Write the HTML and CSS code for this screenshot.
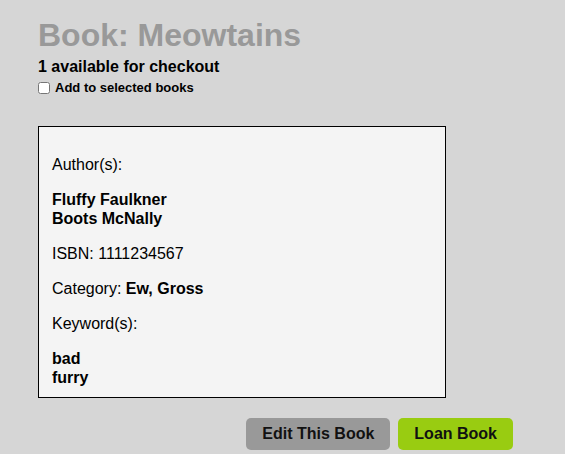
FILE: index.html
```html
<!DOCTYPE html>
<html lang="en">
<head>
<meta charset="utf-8">
<title>Book: Meowtains</title>
<link rel="stylesheet" href="styles.css">
</head>
<body>
<main class="page">
  <h1 class="title">Book: Meowtains</h1>
  <p class="avail">1 available for checkout</p>
  <label class="select"><input type="checkbox" class="check"><span>Add to selected books</span></label>
  <section class="details">
    <p class="row">Author(s):</p>
    <p class="row strong">Fluffy Faulkner<br>Boots McNally</p>
    <p class="row">ISBN: 1111234567</p>
    <p class="row">Category: <b>Ew, Gross</b></p>
    <p class="row">Keyword(s):</p>
    <p class="row strong last">bad<br>furry</p>
  </section>
  <div class="actions">
    <button class="btn btn-edit">Edit This Book</button>
    <button class="btn btn-loan">Loan Book</button>
  </div>
</main>
</body>
</html>
```
FILE: styles.css
```css
html, body {
  margin: 0;
  padding: 0;
  background: #d6d6d6;
}
body {
  font-family: "Liberation Sans", Arial, sans-serif;
  color: #000;
}
.page {
  padding: 17px 0 0 38px;
  width: 475px;
}
.title {
  margin: 0;
  font-size: 32px;
  line-height: 37px;
  font-weight: bold;
  color: #999999;
}
.avail {
  margin: 3px 0 0;
  font-size: 16px;
  line-height: 19px;
  font-weight: bold;
}
.select {
  display: flex;
  align-items: center;
  gap: 5px;
  margin-top: 4px;
  font-size: 13px;
  line-height: 16px;
  font-weight: bold;
}
.check {
  margin: 0;
  width: 12px;
  height: 12px;
}
.details {
  margin-top: 30px;
  width: 408px;
  box-sizing: border-box;
  border: 1px solid #000;
  background: #f4f4f4;
  padding: 12px 13px 10px;
}
.row {
  margin: 16px 0;
  font-size: 16px;
  line-height: 19px;
}
.row.last {
  margin-bottom: 0;
}
.strong, .row b {
  font-weight: bold;
}
.actions {
  display: flex;
  justify-content: flex-end;
  gap: 8px;
  margin-top: 20px;
}
.btn {
  border: none;
  border-radius: 5px;
  padding: 0 16px;
  height: 32px;
  font-family: "Liberation Sans", Arial, sans-serif;
  font-size: 16px;
  font-weight: bold;
  color: #111;
}
.btn-edit {
  background: #999999;
}
.btn-loan {
  background: #99cc11;
}
```
